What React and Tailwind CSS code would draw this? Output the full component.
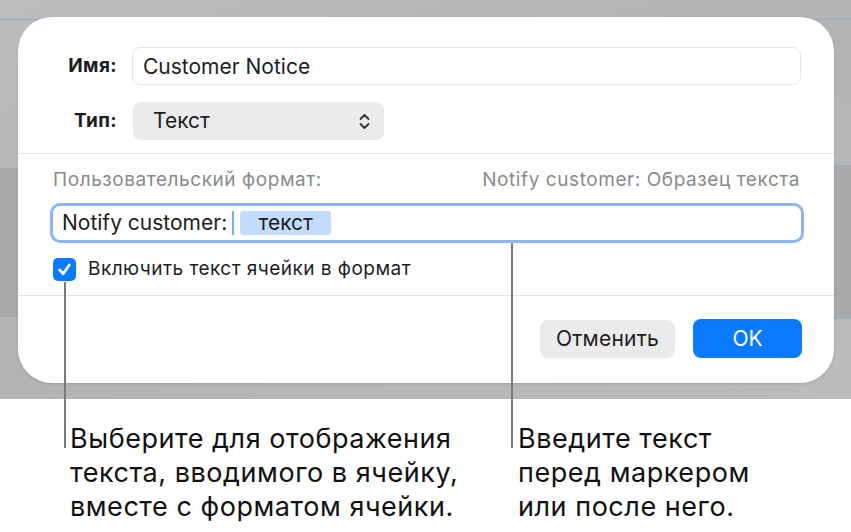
export default function App() {
  const font = { fontFamily: "Inter, 'Noto Sans', sans-serif" };
  return (
    <div className="relative w-[851px] h-[532px] bg-white overflow-hidden" style={font}>
      {/* background canvas */}
      <div className="relative h-[399px] bg-gradient-to-br from-[#bdbdbd] via-[#b3b3b3] to-[#bcbcbc] pt-[17px] pl-[18px] pr-[17px]">
        <div className="absolute left-0 right-0 top-[19px] h-px bg-[#93acd0]" />
        <div className="absolute left-0 w-[18px] top-[168px] h-[149px] bg-[#a9a9a9]" />
        <div className="absolute right-0 w-[17px] top-[165px] h-[153px] bg-[#a9a9a9]" />
        <div className="absolute right-0 w-[17px] top-[165px] h-px bg-[#93acd0]" />
        <div className="absolute right-0 w-[17px] top-[318px] h-px bg-[#93acd0]" />

        {/* dialog */}
        <div className="relative w-[816px] h-[366px] bg-white rounded-[34px] shadow-[0_1px_3px_rgba(0,0,0,0.12)] flex flex-col">
          <div className="flex items-center h-[38px] mt-[30px]">
            <div className="w-[99px] text-right text-[19px] tracking-[0.02em] font-bold text-[#1d1d1f]">Имя:</div>
            <div className="ml-[15px] w-[669px] h-[38px] rounded-[8px] border border-[#e6e6e6] flex items-center pl-[10px] pt-[2px] text-[21px] text-[#1d1d1f]">
              Customer Notice
            </div>
          </div>
          <div className="flex items-center h-[38px] mt-[17px]">
            <div className="w-[99px] text-right text-[19px] tracking-[0.02em] font-bold text-[#1d1d1f]">Тип:</div>
            <div className="ml-[16px] w-[251px] h-[38px] rounded-[8px] bg-[#ebebeb] flex items-center justify-between pl-[20px] pr-[14px] text-[21px] text-[#1d1d1f]">
              <span>Текст</span>
              <svg width="11" height="17" viewBox="0 0 11 17" fill="none" stroke="#333" strokeWidth="1.8" strokeLinecap="round" strokeLinejoin="round">
                <path d="M1.5 6 L5.5 2 L9.5 6" />
                <path d="M1.5 11 L5.5 15 L9.5 11" />
              </svg>
            </div>
          </div>
          <div className="mt-[13px] h-px bg-[#e4e4e4]" />
          <div className="flex justify-between items-center h-[26px] mt-[13px] pl-[35px] pr-[34px] text-[19px] tracking-[0.03em] text-[#8a8a8a]">
            <span>Пользовательский формат:</span>
            <span>Notify customer: Образец текста</span>
          </div>
          <div className="mt-[10px] ml-[32px] w-[754px] h-[40px] rounded-[10px] border-[3px] border-[#8ab6f9] flex items-center pl-[9px] text-[21px] text-[#1d1d1f]">
            <span>Notify customer:</span>
            <span className="ml-[5px] w-[2px] h-[24px] bg-[#7aa9f0]" />
            <span className="ml-[6px] w-[91px] h-[24px] rounded-[3px] bg-[#c4dcfb] flex items-center justify-center">текст</span>
          </div>
          <div className="flex items-center mt-[14px] ml-[35px] h-[24px]">
            <div className="w-[23px] h-[23px] rounded-[5px] bg-[#0a7aff] flex items-center justify-center">
              <svg width="15" height="15" viewBox="0 0 14 14" fill="none" stroke="white" strokeWidth="2.6" strokeLinecap="round" strokeLinejoin="round">
                <path d="M2.5 7.5 L5.8 11 L11.5 2.8" />
              </svg>
            </div>
            <span className="ml-[12px] text-[19px] tracking-[0.025em] text-[#1d1d1f]">Включить текст ячейки в формат</span>
          </div>
          <div className="mt-[14px] h-px bg-[#e4e4e4]" />
          <div className="flex justify-end items-center mt-[23px] pr-[32px] gap-[18px]">
            <button className="w-[135px] h-[38px] rounded-[8px] bg-[#ebebeb] text-[21px] tracking-[0.01em] text-[#1d1d1f]">Отменить</button>
            <button className="w-[109px] h-[39px] rounded-[8px] bg-[#0a7aff] text-[21px] text-white">OK</button>
          </div>
        </div>
      </div>

      {/* callout lines */}
      <div className="absolute left-[64px] top-[282px] w-[2px] h-[166px] bg-[#7a7a7a]" />
      <div className="absolute left-[511px] top-[243px] w-[2px] h-[205px] bg-[#7a7a7a]" />

      {/* callout texts */}
      <div className="flex pt-[23px] text-[27px] tracking-[0.02em] leading-[34px] text-[#111]">
        <div className="ml-[70px] w-[448px]">
          Выберите для отображения<br />текста, вводимого в ячейку,<br />вместе с форматом ячейки.
        </div>
        <div>
          Введите текст<br />перед маркером<br />или после него.
        </div>
      </div>
    </div>
  );
}
